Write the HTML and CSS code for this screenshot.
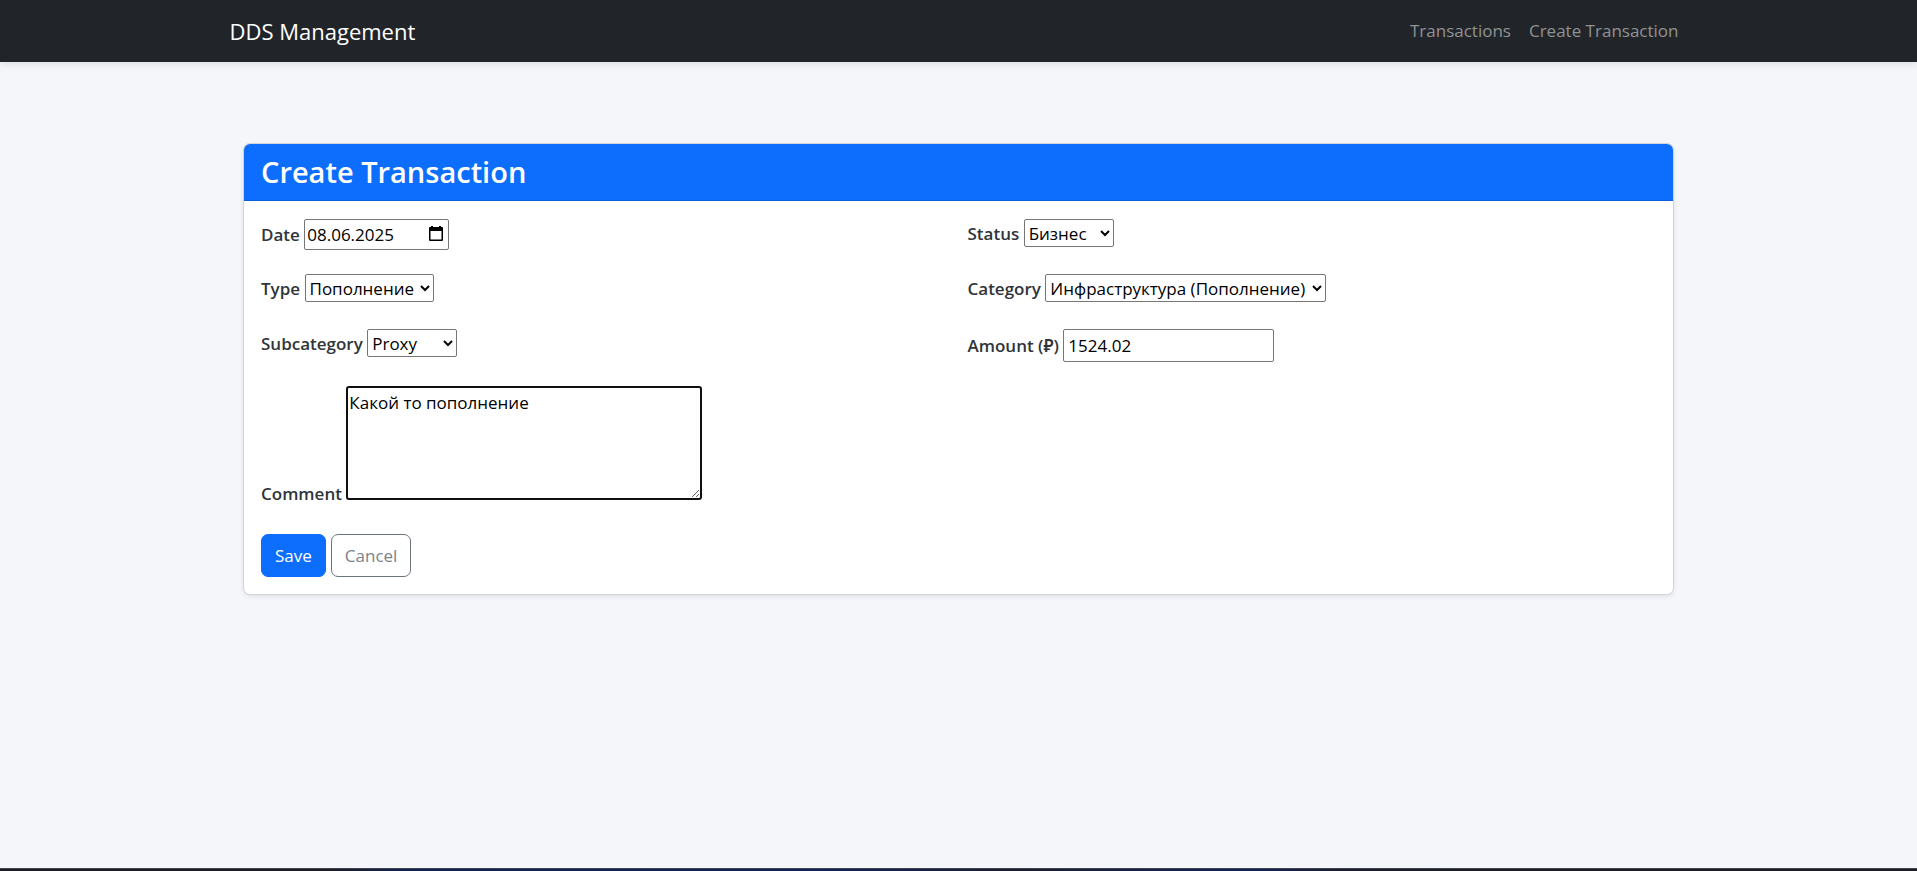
FILE: index.html
```html
<!DOCTYPE html>
<html lang="en">
<head>
<meta charset="utf-8">
<meta name="viewport" content="width=device-width, initial-scale=1">
<title>Create Transaction</title>
<link rel="stylesheet" href="styles.css">
</head>
<body>
<nav class="navbar">
  <div class="navbar-inner">
    <a class="brand" href="#">DDS Management</a>
    <div class="nav-links">
      <a class="nav-link" href="#">Transactions</a>
      <a class="nav-link" href="#">Create Transaction</a>
    </div>
  </div>
</nav>
<main class="content">
  <section class="card">
    <header class="card-header"><h1 class="card-title">Create Transaction</h1></header>
    <form class="card-body">
      <div class="fields">
        <div class="field">
          <label for="date">Date</label>
          <span class="date-box">
            <input class="control date" id="date" type="text" value="08.06.2025">
            <svg class="calendar" viewBox="0 0 16 16" aria-hidden="true"><path d="M3 0h2v1h6V0h2v1h1q1 0 1 1v12q0 1-1 1H2q-1 0-1-1V2q0-1 1-1h1z M2.500 5v8.500h11V5z" fill="#000" fill-rule="evenodd"/></svg>
          </span>
        </div>
        <div class="field">
          <label for="status">Status</label>
          <select class="control select short" id="status"><option>Бизнес</option></select>
        </div>
        <div class="field">
          <label for="type">Type</label>
          <select class="control select medium" id="type"><option>Пополнение</option></select>
        </div>
        <div class="field">
          <label for="category">Category</label>
          <select class="control select long" id="category"><option>Инфраструктура (Пополнение)</option></select>
        </div>
        <div class="field">
          <label for="subcategory">Subcategory</label>
          <select class="control select short" id="subcategory"><option>Proxy</option></select>
        </div>
        <div class="field">
          <label for="amount">Amount (₽)</label>
          <input class="control amount" id="amount" type="text" inputmode="decimal" value="1524.02">
        </div>
        <div class="field wide">
          <label for="comment">Comment</label>
          <textarea class="comment" id="comment">Какой то пополнение</textarea>
        </div>
      </div>
      <div class="actions">
        <button class="btn btn-primary" type="submit">Save</button>
        <button class="btn btn-outline" type="button">Cancel</button>
      </div>
    </form>
  </section>
</main>
<footer class="bottom-bar"></footer>
</body>
</html>
```
FILE: styles.css
```css
*, *::before, *::after { box-sizing: border-box; }

body {
  margin: 0;
  min-height: 100vh;
  display: flex;
  flex-direction: column;
  background: #f4f6fa;
  color: #212529;
  font-family: "Open Sans", "Noto Sans", sans-serif;
  font-size: 17px;
  line-height: 26px;
}

.navbar {
  background: #212529;
  padding: 9px 16px;
  box-shadow: 0 2px 8px rgba(0, 0, 0, 0.1);
}

.navbar-inner {
  max-width: 1458px;
  margin: 0 auto;
  display: flex;
  justify-content: space-between;
  align-items: center;
}

.brand {
  color: #fff;
  font-size: 22px;
  line-height: 44px;
  text-decoration: none;
}

.nav-links { display: flex; }

.nav-link {
  padding: 0 9px;
  color: #909294;
  text-decoration: none;
}

.content {
  flex: 1;
  width: 100%;
  max-width: 1463px;
  margin: 0 auto;
  padding: 81px 16px 32px;
}

.card {
  background: #fff;
  border: 1px solid #d2d4d8;
  border-radius: 7px;
  box-shadow: 0 2px 4px rgba(0, 0, 0, 0.08);
}

.card-header {
  background: #0d6efd;
  border-bottom: 1px solid #0b5ed7;
  border-radius: 6px 6px 0 0;
  padding: 9px 17px;
  color: #fff;
}

.card-title {
  margin: 0;
  font-size: 29px;
  font-weight: 600;
  line-height: 38px;
}

.card-body { padding: 18px 17px 17px; }

.fields {
  display: grid;
  grid-template-columns: 1fr 1fr;
  gap: 24px 18px;
}

.field { min-height: 31px; }
.field.wide { grid-column: 1 / -1; }

.field label {
  color: #30353a;
  font-weight: 600;
}

.control, .comment {
  margin: 0;
  background: #fff;
  color: #000;
  border: 1px solid #767676;
  border-radius: 2px;
  font-family: inherit;
  font-size: 17px;
}

.select { height: 28px; padding: 0; }
.short { width: 90px; }
.medium { width: 129px; }
.long { width: 281px; }

.date-box { position: relative; display: inline-block; }
.date { width: 145px; height: 31px; padding: 1px 2px; }

.calendar {
  position: absolute;
  right: 5px;
  top: 7px;
  width: 16px;
  height: 16px;
  pointer-events: none;
}

.amount { width: 211px; height: 33px; padding: 1px 4px; }

.comment {
  width: 356px;
  height: 114px;
  padding: 2px 1px;
  border: 2px solid #101010;
  border-radius: 3px;
  line-height: 26px;
  outline: none;
  resize: both;
}

.actions {
  display: flex;
  gap: 5px;
  margin-top: 27px;
}

.btn {
  padding: 8px 13px;
  border: 1px solid;
  border-radius: 7px;
  font-family: inherit;
  font-size: 17px;
  line-height: 25px;
}

.btn-primary { background: #0d6efd; border-color: #0d6efd; color: #fff; }
.btn-outline { background: #fff; border-color: #6c757d; color: #7a828a; }

.bottom-bar {
  height: 3px;
  border-top: 1px solid #42444f;
  background: linear-gradient(90deg, #1c1e24 17%, #0f2350 21%, #10245a 43%, #1c1e30 53%, #10245a 65%, #1c1e30 70%, #1c1e24 77%);
}
```
